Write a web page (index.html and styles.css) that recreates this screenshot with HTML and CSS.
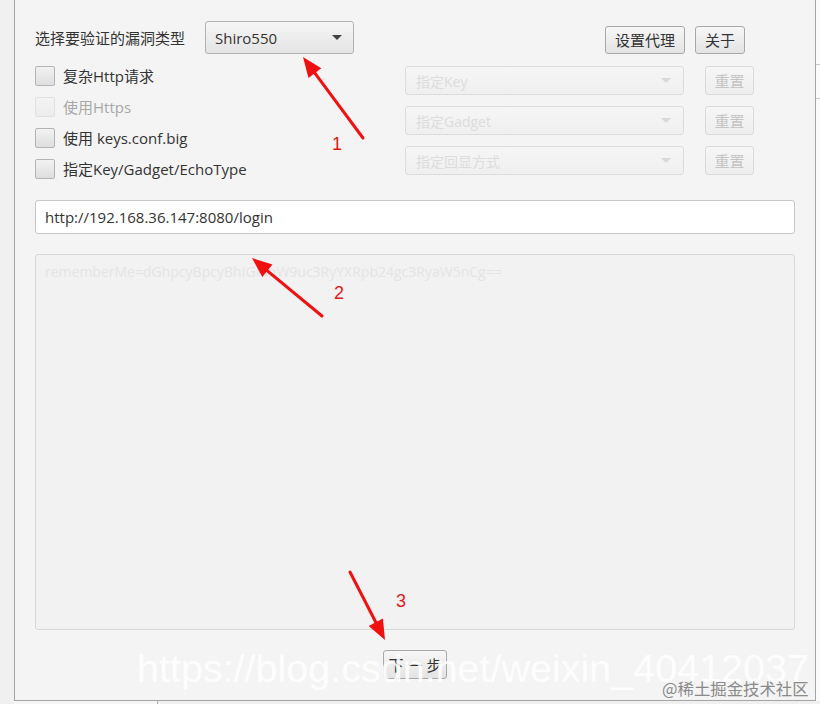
FILE: index.html
```html
<!DOCTYPE html>
<html>
<head>
<meta charset="utf-8">
<link rel="stylesheet" href="styles.css">
</head>
<body>
<div class="desk">
  <div class="left-strip"></div>
  <div class="window">
    <div class="top-row">
      <div class="type-pick">
        <span class="label">选择要验证的漏洞类型</span>
        <div class="combo main-combo"><span>Shiro550</span><i class="arrow"></i></div>
      </div>
      <div class="top-buttons">
        <button class="btn btn-proxy">设置代理</button>
        <button class="btn btn-about">关于</button>
      </div>
    </div>
    <div class="options">
      <div class="checks">
        <label class="check"><span class="box"></span><span>复杂Http请求</span></label>
        <label class="check disabled"><span class="box"></span><span>使用Https</span></label>
        <label class="check"><span class="box"></span><span>使用 keys.conf.big</span></label>
        <label class="check"><span class="box"></span><span>指定Key/Gadget/EchoType</span></label>
      </div>
      <div class="pickers">
        <div class="picker-row"><div class="combo off"><span>指定Key</span><i class="arrow"></i></div><button class="btn off">重置</button></div>
        <div class="picker-row"><div class="combo off"><span>指定Gadget</span><i class="arrow"></i></div><button class="btn off">重置</button></div>
        <div class="picker-row"><div class="combo off"><span>指定回显方式</span><i class="arrow"></i></div><button class="btn off">重置</button></div>
      </div>
    </div>
    <div class="url">http://192.168.36.147:8080/login</div>
    <div class="area"><span class="ph">rememberMe=dGhpcyBpcyBhIGRlbW9uc3RyYXRpb24gc3RyaW5nCg==</span></div>
    <div class="bottom-row"><button class="btn btn-next">下 一 步</button></div>
  </div>
  <div class="right-strip"><div class="rs-line l1"></div><div class="rs-line l2"></div></div>
</div>
<div class="under"><div class="under-left"></div></div>

<svg class="marks" width="820" height="704" viewBox="0 0 820 704">
  <g stroke="#f01010" stroke-width="3" stroke-linecap="round" fill="#f01010">
    <line x1="363" y1="138" x2="314.9" y2="73.1"/>
    <polygon stroke="none" points="303,57 321.3,68.3 308.5,77.9"/>
    <line x1="322" y1="316" x2="267.4" y2="270.8"/>
    <polygon stroke="none" points="252,258 272.5,264.6 262.3,277"/>
    <line x1="350" y1="572" x2="375.8" y2="622.2"/>
    <polygon stroke="none" points="385,640 382.9,618.5 368.7,625.9"/>
  </g>
  <g fill="#e01818" font-family="Liberation Sans, sans-serif" font-size="18">
    <text x="332" y="150">1</text>
    <text x="334" y="299">2</text>
    <text x="396" y="607">3</text>
  </g>
</svg>
<div class="wm">https://blog.csdn.net/weixin_40412037</div>
<div class="wm2">@稀土掘金技术社区</div>
</body>
</html>
```

FILE: styles.css
```css
* { box-sizing: border-box; }
html, body { margin: 0; padding: 0; }
body {
  width: 820px;
  height: 704px;
  overflow: hidden;
  background: #f0f0f0;
  font-family: "Open Sans", "Noto Sans CJK SC", sans-serif;
  font-size: 15px;
  color: #333;
  position: relative;
}
.desk { display: flex; height: 701px; }
.left-strip { width: 14px; background: #f0f0f0; }
.window {
  width: 802px;
  height: 701px;
  background: #f4f4f4;
  border-left: 1px solid #a4a4a4;
  border-right: 1px solid #a4a4a4;
  border-bottom: 1px solid #a4a4a4;
  padding: 21px 20px 0 20px;
  display: flex;
  flex-direction: column;
}
.right-strip { width: 4px; background: #fbfbfb; position: relative; }
.rs-line { height: 1px; background: #c8c8c8; margin-top: 64px; }
.rs-line.l2 { margin-top: 33px; }
.under { height: 3px; background: #f0f0f0; padding-left: 14px; }
.under-left { width: 144px; height: 3px; border-right: 1px solid #b0b0b0; background: #f6f6f6; }

.top-row { display: flex; justify-content: space-between; height: 33px; }
.type-pick { display: flex; align-items: center; }
.label { width: 170px; line-height: 20px; }
.top-buttons { display: flex; gap: 10px; align-items: flex-end; margin-right: 50px; }

.btn {
  font-family: "Open Sans", "Noto Sans CJK SC", sans-serif;
  font-size: 15px;
  color: #333;
  height: 28px;
  padding: 0;
  border: 1px solid #a8a8a8;
  border-radius: 3px;
  background: linear-gradient(#f7f7f7, #e3e3e3);
  line-height: 26px;
}
.btn-proxy { width: 80px; }
.btn-about { width: 50px; }
.btn.off {
  width: 49px;
  height: 29px;
  color: #c4c4c4;
  border-color: #dadada;
  background: linear-gradient(#f6f6f6, #eeeeee);
}

.combo {
  display: flex;
  align-items: center;
  justify-content: space-between;
  border: 1px solid #b2b2b2;
  border-radius: 3px;
  background: linear-gradient(#f6f6f6, #e4e4e4);
  padding: 0 11px 0 9px;
}
.main-combo { width: 149px; height: 33px; }
.arrow {
  width: 0; height: 0;
  border-left: 5px solid transparent;
  border-right: 5px solid transparent;
  border-top: 5px solid #444;
}
.combo.off {
  width: 279px;
  height: 29px;
  color: #dcdcdc;
  border-color: #dcdcdc;
  background: linear-gradient(#f6f6f6, #efefef);
  padding: 0 12px 0 10px;
  font-size: 14px;
}
.combo.off .arrow { border-top-color: #d8d8d8; }

.options { display: flex; justify-content: space-between; margin-top: 12px; }
.checks { display: flex; flex-direction: column; gap: 11px; }
.check { display: flex; align-items: center; gap: 8px; height: 20px; line-height: 20px; }
.box {
  width: 20px; height: 20px;
  border: 1px solid #b4b4b4;
  border-radius: 2px;
  background: linear-gradient(#f2f2f2, #dedede);
}
.check.disabled { color: #a8a8a8; }
.check.disabled .box { border-color: #e0e0e0; background: linear-gradient(#f4f4f4, #ececec); }
.pickers { display: flex; flex-direction: column; gap: 11px; margin-right: 41px; }
.picker-row { display: flex; gap: 21px; }

.url {
  margin-top: 21px;
  height: 34px;
  background: #fff;
  border: 1px solid #c6c6c6;
  border-radius: 3px;
  padding: 0 9px;
  line-height: 32px;
}
.area {
  margin-top: 20px;
  height: 376px;
  background: #f2f2f2;
  border: 1px solid #d8d8d8;
  border-radius: 3px;
  padding: 6px 9px;
}
.ph { color: #e4e4e4; font-size: 14px; }
.bottom-row { display: flex; justify-content: center; margin-top: 20px; }
.btn-next { width: 64px; height: 29px; }

.marks { position: absolute; left: 0; top: 0; pointer-events: none; }
.wm {
  position: absolute;
  left: 137px;
  top: 640px;
  font-family: "Liberation Sans", sans-serif;
  font-size: 39.5px;
  line-height: 56px;
  color: rgba(255, 255, 255, 0.85);
  white-space: nowrap;
}
.wm2 {
  position: absolute;
  left: 662px;
  top: 677px;
  font-family: "Noto Sans CJK SC", sans-serif;
  font-size: 16.4px;
  line-height: 22px;
  color: #8a8a8a;
  white-space: nowrap;
}
```
